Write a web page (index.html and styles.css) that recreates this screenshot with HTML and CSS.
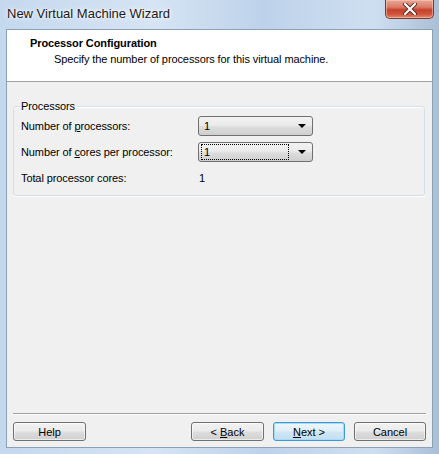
FILE: index.html
```html
<!DOCTYPE html>
<html lang="en">

<head>
    <meta charset="utf-8">
    <meta name="viewport" content="width=device-width, initial-scale=1.0">
    <title>New Virtual Machine Wizard</title>
    <link rel="stylesheet" href="styles.css">
</head>

<body>
    <div id="vindue">
        <div id="titel">
            <span>New Virtual Machine Wizard</span>
            <button id="luk">
                <svg width="16" height="12" viewBox="0 0 16 12">
                    <path d="M3 1 L13 11 M13 1 L3 11" stroke="#5a2a22" stroke-width="4" stroke-linecap="round" />
                    <path d="M3 1 L13 11 M13 1 L3 11" stroke="#ffffff" stroke-width="2.2" stroke-linecap="round" />
                </svg>
            </button>
        </div>

        <div id="klient">
            <header>
                <h1>Processor Configuration</h1>
                <p>Specify the number of processors for this virtual machine.</p>
            </header>

            <main>
                <fieldset class="gruppe">
                    <legend>Processors</legend>
                    <div class="raekke">
                        <label>Number of <u>p</u>rocessors:</label>
                        <div class="combo"><span class="vaerdi">1</span><span class="pil"></span></div>
                    </div>
                    <div class="raekke">
                        <label>Number of <u>c</u>ores per processor:</label>
                        <div class="combo"><span class="vaerdi fokus">1</span><span class="pil"></span></div>
                    </div>
                    <div class="raekke">
                        <label>Total processor cores:</label>
                        <span class="total">1</span>
                    </div>
                </fieldset>
            </main>

            <footer>
                <button class="knap">Help</button>
                <div class="nav">
                    <button class="knap">&lt; <u>B</u>ack</button>
                    <button class="knap standard"><u>N</u>ext &gt;</button>
                    <button class="knap">Cancel</button>
                </div>
            </footer>
        </div>
    </div>
</body>

</html>
```

FILE: styles.css
```css
html,
body,
* {
    margin: 0;
    padding: 0;
    box-sizing: border-box;
}

body {
    font-family: "Liberation Sans", Arial, sans-serif;
    font-size: 11px;
    letter-spacing: -0.1px;
    color: #000;
}

#vindue {
    width: 439px;
    height: 454px;
    padding: 0 6px 6px 6px;
    display: flex;
    flex-direction: column;
    background-image: linear-gradient(to right, #c4d8ee 0%, #d6e4f4 35%, #bdd2ea 60%, #cfdff1 85%, #a9bfd6 100%);
}

#titel {
    height: 29px;
    display: flex;
    justify-content: space-between;
    align-items: flex-start;
}

#titel span {
    font-size: 13px;
    letter-spacing: 0;
    line-height: 15px;
    padding-top: 6px;
    padding-left: 1px;
    color: #1a1a1a;
    text-shadow: 0 0 6px #ffffff, 0 0 3px #ffffff;
}

#luk {
    width: 49px;
    height: 19px;
    margin-right: -1px;
    border: 1px solid #7e3a2e;
    border-top: none;
    border-radius: 0 0 5px 5px;
    background-image: linear-gradient(to bottom, #e9a897 0%, #d97a66 40%, #c5412c 55%, #d2573f 80%, #e08b73 100%);
    display: flex;
    align-items: center;
    justify-content: center;
    box-shadow: inset 0 0 0 1px rgba(255, 210, 200, 0.5);
}

#klient {
    flex: 1;
    display: flex;
    flex-direction: column;
    border: 1px solid #8b9fb5;
    background-color: #f0f0f0;
}

header {
    height: 52px;
    background-color: #ffffff;
    border-bottom: 1px solid #a0a0a0;
    padding: 7px 0 0 23px;
}

header h1 {
    font-size: 11px;
    font-weight: bold;
    line-height: 13px;
}

header p {
    line-height: 13px;
    margin-top: 3px;
    padding-left: 24px;
}

main {
    flex: 1;
    padding-top: 18px;
}

.gruppe {
    margin: 0 7px 0 6px;
    padding: 0 6px 4px 6px;
    border: 1px solid #d5dfe5;
    border-radius: 3px;
    box-shadow: 0 1px 0 #ffffff, inset 0 1px 0 #ffffff;
}

.gruppe legend {
    padding: 0 1px;
    line-height: 13px;
}

.raekke {
    height: 26px;
    display: flex;
    align-items: center;
    padding-left: 1px;
}

.raekke label {
    width: 177px;
}

.combo {
    width: 115px;
    height: 20px;
    border: 1px solid #707070;
    border-radius: 3px;
    background-image: linear-gradient(to bottom, #f2f2f2 0%, #ebebeb 45%, #dddddd 55%, #cfcfcf 100%);
    display: flex;
    align-items: center;
    padding: 0 6px 0 2px;
}

.vaerdi {
    flex: 1;
    height: 16px;
    line-height: 14px;
    padding-left: 2px;
    border: 1px solid transparent;
    margin-right: 9px;
}

.fokus {
    border: 1px dotted #000;
}

.pil {
    width: 0;
    height: 0;
    border-left: 4px solid transparent;
    border-right: 4px solid transparent;
    border-top: 4px solid #000;
}

.total {
    padding-left: 1px;
}

footer {
    height: 34px;
    margin: 0 6px;
    border-top: 1px solid #a0a0a0;
    box-shadow: inset 0 1px 0 #ffffff;
    padding-top: 8px;
    display: flex;
    justify-content: space-between;
    align-items: flex-start;
}

.nav {
    display: flex;
    gap: 9px;
}

.knap {
    width: 72px;
    height: 19px;
    font-family: "Liberation Sans", Arial, sans-serif;
    font-size: 11px;
    color: #000;
    border: 1px solid #707070;
    border-radius: 3px;
    background-image: linear-gradient(to bottom, #f2f2f2 0%, #ebebeb 45%, #dddddd 55%, #cfcfcf 100%);
    box-shadow: inset 0 0 0 1px rgba(255, 255, 255, 0.6);
}

.knap:first-child {
    width: 73px;
}

.standard {
    border-color: #3c9ad8;
    background-image: linear-gradient(to bottom, #eef7fd 0%, #e0eff9 45%, #cfe6f5 55%, #c3dff2 100%);
    box-shadow: inset 0 0 0 1px #a8dcf6;
}
```
